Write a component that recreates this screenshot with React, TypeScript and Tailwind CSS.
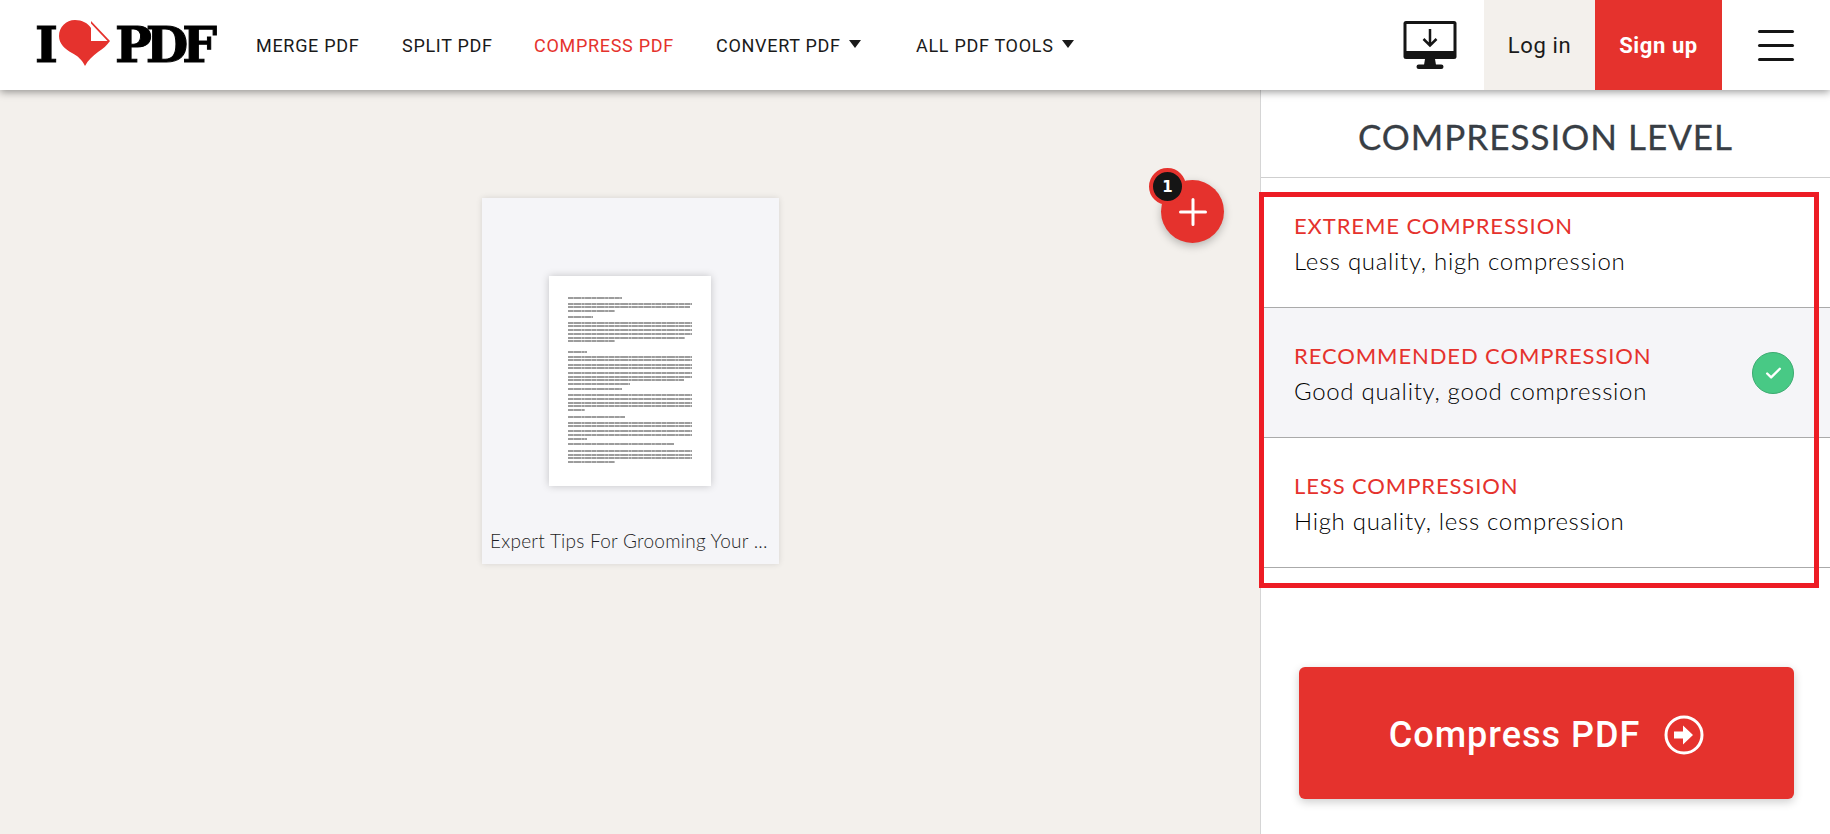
import { Check } from "lucide-react";

const navItems = [
  { title: "MERGE PDF", width: "w-[146px]", color: "text-[#1a1a1a]" },
  { title: "SPLIT PDF", width: "w-[132px]", color: "text-[#1a1a1a]" },
  { title: "COMPRESS PDF", width: "w-[182px]", color: "text-[#e5322d]" },
  { title: "CONVERT PDF", width: "w-[200px]", color: "text-[#1a1a1a]", caret: true },
  { title: "ALL PDF TOOLS", width: "w-[170px]", color: "text-[#1a1a1a]", caret: true },
];

const levels = [
  { title: "EXTREME COMPRESSION", text: "Less quality, high compression" },
  { title: "RECOMMENDED COMPRESSION", text: "Good quality, good compression", active: true },
  { title: "LESS COMPRESSION", text: "High quality, less compression" },
];

// thumbnail lines of the scanned page: [y, x end] in page pixels
const docLines = [
  [22, 73], [28, 143], [31, 141], [35, 66], [41, 44], [47, 143], [50, 143], [54, 143], [58, 143], [62, 136], [65, 66],
  [76, 38], [81, 143], [84, 143], [89, 143], [92, 143], [97, 143], [101, 143], [104, 135], [108, 81], [113, 73],
  [119, 143], [123, 143], [127, 143], [130, 143], [134, 36], [141, 76], [147, 143], [150, 143], [155, 143], [159, 143], [163, 38],
  [168, 125], [175, 143], [179, 143], [182, 143], [186, 66],
];

function Logo() {
  return (
    <div className="flex items-center font-['DejaVu_Serif',serif] font-bold text-[49px] leading-none text-black [-webkit-text-stroke:1px_black]">
      <span className="w-[24px]">I</span>
      <svg width="52" height="46" viewBox="0 0 52 46" className="-mt-[4px]">
        <path
          d="M32 8C29 3 23 0 16 0C7 0 0 7 0 16C0 24 6 29 13 33C19 36 23 40 26 46C29 40 34 36 39 32C44 29 48 25 51 21L32 1Z"
          fill="#e5322d"
        />
        <path d="M32 3.5L32 21L48.5 21Z" fill="#fff" />
      </svg>
      <span className="ml-[4px] tracking-[-6px]">PDF</span>
    </div>
  );
}

function Caret() {
  return <span className="w-0 h-0 ml-[8px] -mt-[3px] border-x-[6px] border-x-transparent border-t-[8px] border-t-[#1a1a1a]" />;
}

function DesktopIcon() {
  return (
    <svg width="54" height="48" viewBox="0 0 54 48" className="shrink-0">
      <rect x="0.5" width="53" height="38" rx="2.5" fill="#151515" />
      <rect x="3.5" y="3" width="47" height="27" fill="#fff" />
      <path d="M22 38H32L33 44H21Z" fill="#151515" />
      <rect x="13.5" y="43.5" width="27" height="4.5" rx="2.2" fill="#151515" />
      <path d="M27 8V24M20.5 18L27 24.5L33.5 18" fill="none" stroke="#151515" strokeWidth="2.5" />
    </svg>
  );
}

function DocThumb() {
  return (
    <svg width="162" height="210" viewBox="0 0 162 210" className="block">
      <rect width="162" height="210" fill="#fff" />
      <g className="blur-[0.45px]">
        {docLines.map(([y, end]) => (
          <line key={y} x1="19" x2={end} y1={y} y2={y} stroke="#3a3a3a" strokeWidth="1" strokeDasharray="5 0.35 8 0.35 3 0.35 6 0.35" />
        ))}
      </g>
    </svg>
  );
}

export default function App() {
  return (
    <div className="h-[834px] w-[1830px] overflow-hidden flex flex-col bg-[#f3f0ec] font-['Lato',sans-serif]">
      <header className="relative z-10 h-[90px] shrink-0 bg-white flex items-stretch shadow-[0_2px_8px_rgba(0,0,0,0.4)]">
        <div className="pl-[35px] w-[256px] shrink-0 flex items-center">
          <Logo />
        </div>
        <nav className="flex items-center font-['Roboto',sans-serif] text-[18px] tracking-[0.7px]">
          {navItems.map((item) => (
            <a key={item.title} className={`${item.width} ${item.color} flex items-center`}>
              {item.title}
              {item.caret && <Caret />}
            </a>
          ))}
        </nav>
        <div className="ml-auto flex items-stretch font-['Roboto',sans-serif] text-[22px] tracking-[0.6px]">
          <div className="flex items-center pr-[27px]">
            <DesktopIcon />
          </div>
          <a className="w-[111px] bg-[#f3f0ec] text-[#1a1a1a] flex items-center justify-center">Log in</a>
          <a className="w-[127px] bg-[#e5322d] text-white font-bold flex items-center justify-center">Sign up</a>
          <button className="w-[108px] flex flex-col items-center justify-center gap-[11px]">
            <span className="w-[36px] h-[3px] bg-[#151515] rounded-full" />
            <span className="w-[36px] h-[3px] bg-[#151515] rounded-full" />
            <span className="w-[36px] h-[3px] bg-[#151515] rounded-full" />
          </button>
        </div>
      </header>

      <div className="flex-1 flex min-h-0">
        <main className="relative flex-1 pl-[482px] pt-[108px]">
          <div className="w-[297px] h-[366px] bg-[#f5f5f8] flex flex-col shadow-[0_0_6px_rgba(0,0,0,0.12)]">
            <div className="mt-[78px] ml-[67px] w-[162px] shadow-[0_0_8px_rgba(0,0,0,0.2)]">
              <DocThumb />
            </div>
            <div className="mt-[43px] ml-[8px] w-[285px] text-[19px] font-light leading-[24px] text-[#1f1f26] whitespace-nowrap overflow-hidden tracking-[0.25px]">
              Expert Tips For Grooming Your ...
            </div>
          </div>

          {/* add more files */}
          <button className="absolute left-[1161px] top-[90px] w-[63px] h-[63px] rounded-full bg-[#e5322d] flex items-center justify-center shadow-[0_3px_8px_rgba(0,0,0,0.25)]">
            <svg width="28" height="28" viewBox="0 0 28 28" className="mt-[1px]">
              <path d="M14 1.5V26.5M1.5 14H26.5" stroke="#fff" strokeWidth="3" strokeLinecap="round" />
            </svg>
            <span className="absolute -left-[12px] -top-[12px] w-[37px] h-[37px] pt-[2px] rounded-full bg-[#151515] border-[4px] border-[#e5322d] flex items-center justify-center font-['DejaVu_Sans',sans-serif] text-[15px] font-bold text-white">
              1
            </span>
          </button>
        </main>

        <aside className="relative w-[570px] shrink-0 bg-white border-l border-[#d5d5d5]">
          <h1 className="h-[88px] pt-[21px] text-center text-[35px] leading-[50px] font-normal tracking-[1px] text-[#383e45] border-b border-[#cfcfcf] [-webkit-text-stroke:0.3px_#383e45]">
            COMPRESSION LEVEL
          </h1>
          {levels.map((level) => (
            <div
              key={level.title}
              className={`relative h-[130px] pl-[33px] pt-[33px] border-b border-[#aaaaaa] ${level.active ? "bg-[#f5f5f8]" : ""}`}
            >
              <div className="text-[22px] leading-[30px] tracking-[0.9px] text-[#e5322d]">{level.title}</div>
              <div className="text-[24px] leading-[30px] mt-[5px] tracking-[0.7px] font-light text-black">{level.text}</div>
              {level.active && (
                <span className="absolute left-[491px] top-[44px] w-[42px] h-[42px] rounded-full bg-[#48c985] border border-[#3bab70] flex items-center justify-center">
                  <Check size={19} strokeWidth={3} color="#fff" />
                </span>
              )}
            </div>
          ))}
          <div className="pl-[38px] pt-[99px]">
            <button className="w-[495px] h-[132px] pt-[4px] rounded-[6px] bg-[#e5322d] text-white font-['Roboto',sans-serif] text-[36px] font-medium tracking-[1px] flex items-center justify-center gap-[24px] shadow-[0_3px_10px_rgba(0,0,0,0.2)]">
              Compress PDF
              <svg width="40" height="40" viewBox="0 0 40 40">
                <circle cx="20" cy="20" r="18" fill="none" stroke="#fff" strokeWidth="3" />
                <path d="M10 16.5H19V10.5L29 20L19 29.5V23.5H10Z" fill="#fff" />
              </svg>
            </button>
          </div>

          {/* highlight drawn over the options */}
          <div className="absolute -left-[2px] top-[102px] w-[560px] h-[396px] border-[5px] border-[#ed1c24] pointer-events-none" />
        </aside>
      </div>
    </div>
  );
}
